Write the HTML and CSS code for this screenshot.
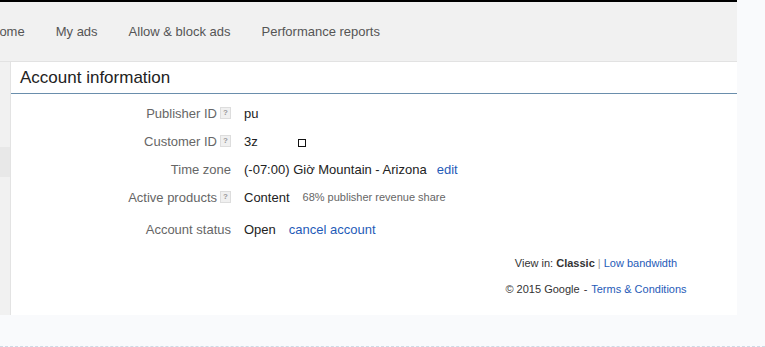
FILE: index.html
```html
<!DOCTYPE html>
<html>
<head>
<meta charset="utf-8">
<link rel="stylesheet" href="styles.css">
</head>
<body>
<div class="page">
  <div class="topbar"></div>
  <nav class="nav">
    <a class="nav-item">Home</a>
    <a class="nav-item">My ads</a>
    <a class="nav-item">Allow &amp; block ads</a>
    <a class="nav-item">Performance reports</a>
  </nav>
  <div class="body">
    <div class="sidebar"><div class="side-sel"></div></div>
    <div class="main">
      <h1 class="title">Account information</h1>
      <div class="rows">
        <div class="label">Publisher ID <span class="help">?</span></div>
        <div class="value">pu</div>
        <div class="label">Customer ID <span class="help">?</span></div>
        <div class="value">3z<span class="box"></span></div>
        <div class="label">Time zone</div>
        <div class="value">(-07:00) Giờ Mountain - Arizona <a class="link edit">edit</a></div>
        <div class="label">Active products <span class="help">?</span></div>
        <div class="value">Content <span class="note">68% publisher revenue share</span></div>
        <div class="label status">Account status</div>
        <div class="value status">Open <a class="link cancel">cancel account</a></div>
      </div>
      <div class="footer">
        <div class="f-line">View in: <b>Classic</b> <span class="sep">|</span> <a class="link">Low bandwidth</a></div>
        <div class="f-line f2">© 2015 Google <span class="dash">-</span> <a class="link">Terms &amp; Conditions</a></div>
      </div>
    </div>
  </div>
  <div class="bottom"></div>
</div>
</body>
</html>
```
FILE: styles.css
```css
html, body {
  margin: 0;
  padding: 0;
}
body {
  background: #f9fafc;
  font-family: "Liberation Sans", Arial, sans-serif;
  font-size: 13px;
  color: #222;
  width: 765px;
  height: 347px;
  overflow: hidden;
}
.page {
  width: 737px;
}
.topbar {
  height: 2px;
  background: #000;
}
.nav {
  height: 59px;
  background: #f1f1f1;
  border-bottom: 1px solid #e2e2e2;
  display: flex;
  align-items: center;
  gap: 31px;
  margin-left: -10px;
}
.nav-item {
  color: #555;
  font-size: 13px;
  white-space: nowrap;
}
.body {
  display: flex;
  height: 253px;
}
.sidebar {
  width: 10px;
  background: #f1f1f1;
  border-right: 1px solid #e3e3e3;
  padding-top: 85px;
}
.side-sel {
  height: 30px;
  background: #e8e8e8;
}
.main {
  flex: 1;
  background: #fff;
  display: flex;
  flex-direction: column;
}
.title {
  margin: 0;
  height: 31px;
  line-height: 31px;
  padding-left: 9px;
  font-size: 17px;
  font-weight: normal;
  color: #222;
  border-bottom: 1px solid #6a8eac;
  background: #fff;
}
.rows {
  display: grid;
  grid-template-columns: 220px 1fr;
  column-gap: 13px;
  grid-auto-rows: 28px;
  margin-top: 5px;
}
.label {
  color: #666;
  display: flex;
  align-items: center;
  justify-content: flex-end;
  white-space: nowrap;
}
.value {
  display: flex;
  align-items: center;
  white-space: nowrap;
}
.label.status, .value.status {
  margin-top: 9px;
}
.help {
  display: inline-block;
  width: 9px;
  height: 10px;
  margin-left: 3px;
  border: 1px solid #ddd;
  background: #f0f0f0;
  color: #999;
  font-size: 8px;
  line-height: 10px;
  text-align: center;
  font-weight: bold;
}
.box {
  display: inline-block;
  width: 6px;
  height: 6px;
  border: 1.5px solid #111;
  margin-left: 40px;
  margin-top: 3px;
}
.link {
  color: #1f5bb8;
}
.edit { margin-left: 10px; }
.cancel { margin-left: 13px; }
.note {
  font-size: 11px;
  color: #666;
  margin-left: 13px;
}
.footer {
  margin-top: 16px;
  margin-left: auto;
  margin-right: 21px;
  width: 240px;
  text-align: center;
  font-size: 11px;
  color: #333;
}
.f-line {
  height: 16px;
  line-height: 16px;
}
.f2 {
  margin-top: 10px;
}
.sep { color: #999; }
.dash { margin: 0 1px; }
.bottom {
  width: 765px;
  height: 31px;
  border-bottom: 1px dashed #cfdae6;
}
```
